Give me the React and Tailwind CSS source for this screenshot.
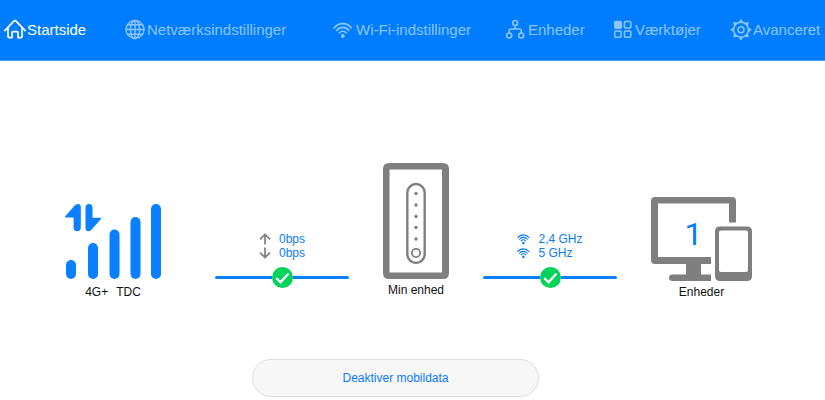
import clsx from "clsx";

const stroke = {
  fill: "none",
  stroke: "currentColor",
  strokeWidth: 1.5,
  strokeLinecap: "round",
  strokeLinejoin: "round",
};

function HomeIcon() {
  return (
    <svg className="h-[22px] w-[22px] shrink-0" viewBox="0 0 22 22" aria-hidden="true" {...stroke} strokeWidth="1.7">
      <path d="M.8 11.6 9.9 2.2Q11 1.2 12.1 2.2L21.2 11.6" />
      <path d="M4 9.6V17.5Q4 18.7 5.2 18.7H8V13.5Q8 12.6 8.9 12.6H13.1Q14 12.6 14 13.5V18.7H16.8Q18 18.7 18 17.5V9.6" />
    </svg>
  );
}

function GlobeIcon() {
  return (
    <svg className="h-[22px] w-[22px] shrink-0" viewBox="0 0 22 22" aria-hidden="true" {...stroke} strokeWidth="1.4">
      <circle cx="11" cy="10.5" r="9" />
      <ellipse cx="11" cy="10.5" rx="4.6" ry="9" />
      <path d="M11 1.5V19.5M2 10.5H20M3.3 5.8H18.7M3.3 15.2H18.7" />
    </svg>
  );
}

function WifiIcon({ className, viewBox = "0 0 22 22" }) {
  return (
    <svg className={className} viewBox={viewBox} aria-hidden="true" {...stroke} strokeWidth="1.7">
      <path d="M1.2 8.9A10.8 10.8 0 0 1 18.4 8.9" />
      <path d="M3.8 11.4A7.6 7.6 0 0 1 15.800 11.4" />
      <path d="M6.400 13.800A4.500 4.500 0 0 1 13.200 13.800" />
      <circle cx="9.800" cy="17" r="1.900" fill="currentColor" stroke="none" />
    </svg>
  );
}

function NetworkIcon() {
  return (
    <svg className="h-[22px] w-[22px] shrink-0" viewBox="0 0 22 22" aria-hidden="true" {...stroke} strokeWidth="1.6">
      <circle cx="10.2" cy="4" r="2.5" />
      <circle cx="4.2" cy="16.5" r="2.5" />
      <circle cx="16.2" cy="16.5" r="2.5" />
      <path d="M10.2 6.5V10M4.2 13.8V11.5Q4.2 10 5.7 10H14.7Q16.2 10 16.2 11.5V13.8" />
    </svg>
  );
}

function ToolsIcon() {
  return (
    <svg className="h-[22px] w-[22px] shrink-0" viewBox="0 0 22 22" aria-hidden="true" {...stroke}>
      <rect x="2.7" y="2.6" width="6.6" height="6.6" rx="1" fill="currentColor" />
      <rect x="12.4" y="2.6" width="6.4" height="6.4" rx="1" />
      <rect x="2.7" y="12" width="6.4" height="6.2" rx="1" />
      <rect x="12.4" y="12" width="6.4" height="6.2" rx="1" />
    </svg>
  );
}

function GearIcon() {
  return (
    <svg className="h-[22px] w-[22px] shrink-0" viewBox="0 0 22 22" aria-hidden="true" {...stroke}>
      <circle cx="11" cy="10.7" r="7.5" />
      <circle cx="11" cy="10.7" r="3" />
      {[0, 45, 90, 135, 180, 225, 270, 315].map((deg) => (
        <path key={deg} d="M9.8 2.8 11 1 12.2 2.8Z" fill="currentColor" transform={`rotate(${deg} 11 10.7)`} />
      ))}
    </svg>
  );
}

const menu = [
  { label: "Startside", icon: <HomeIcon />, active: true },
  { label: "Netværksindstillinger", icon: <GlobeIcon /> },
  { label: "Wi-Fi-indstillinger", icon: <WifiIcon className="h-[22px] w-[22px] shrink-0" /> },
  { label: "Enheder", icon: <NetworkIcon /> },
  { label: "Værktøjer", icon: <ToolsIcon /> },
  { label: "Avanceret", icon: <GearIcon /> },
];

function SignalIcon() {
  return (
    <svg className="h-[75px] w-[96px] text-[#0a80ff]" viewBox="0 0 96 75" fill="currentColor" aria-hidden="true">
      <path d="M.8 13.4Q-.7 13.4 .6 11.8L9.5 1.7Q11 0 13 0Q15.8 0 15.8 3V23.5Q15.8 27.2 12.2 27.2Q8.6 27.2 8.6 23.5V13.4Z" />
      <path d="M20.5 3.5Q20.5 0 24 0Q27.5 0 27.5 3.5V13.7H35Q37 13.7 35.7 15.3L26.5 25.7Q25 27.3 23 27.2Q20.5 27 20.5 24Z" />
      <rect x="1" y="56" width="10" height="19" rx="5" />
      <rect x="23" y="39" width="10" height="36" rx="5" />
      <rect x="44.5" y="25.5" width="10" height="49.5" rx="5" />
      <rect x="65.5" y="13" width="10" height="62" rx="5" />
      <rect x="86" y="0" width="10" height="75" rx="5" />
    </svg>
  );
}

function RouterIcon() {
  return (
    <svg className="h-[116px] w-[66px] text-[#7f7f7f]" viewBox="0 0 66 116" fill="none" stroke="currentColor" aria-hidden="true">
      <path
        d="M6 0H60Q66 0 66 6V110Q66 116 60 116H6Q0 116 0 110V6Q0 0 6 0ZM6.5 6.5V109.5H59V6.5Z"
        fill="currentColor"
        fillRule="evenodd"
        stroke="none"
      />
      <rect x="24.3" y="21" width="17.4" height="79" rx="8.7" strokeWidth="2.4" />
      {[30.5, 42, 53.5, 64.5, 76].map((cy) => (
        <circle key={cy} cx="33" cy={cy} r="1.7" fill="currentColor" stroke="none" />
      ))}
      <circle cx="33" cy="90" r="4.2" strokeWidth="1.7" />
    </svg>
  );
}

function DevicesIcon() {
  return (
    <svg className="h-[84px] w-[101px] text-[#7f7f7f]" viewBox="0 0 101 84" fill="currentColor" aria-hidden="true">
      <path d="M4 0H81Q85 0 85 4V25.5H78V6.5H7V60H60V67H50V77.5H60V84H21.5Q18 84 18 80.7Q18 77.5 21.5 77.5H35V67H4Q0 67 0 63V4Q0 0 4 0Z" />
      <path
        d="M69 29.5H96Q101 29.5 101 34.5V79Q101 84 96 84H69Q64 84 64 79V34.5Q64 29.5 69 29.5ZM70 33.5Q68 33.5 68 35.5V73Q68 75 70 75H95Q97 75 97 73V35.5Q97 33.5 95 33.5Z"
        fillRule="evenodd"
      />
    </svg>
  );
}

function ArrowIcon({ down }) {
  return (
    <svg className="h-3 w-3" viewBox="0 0 12 12" fill="none" stroke="#7f7f7f" strokeWidth="1.7" aria-hidden="true">
      <path d={down ? "M6 .5V10.5M1 5.7 6 10.5 11 5.7" : "M6 11.5V1.5M1 6.3 6 1.5 11 6.3"} />
    </svg>
  );
}

// Connection between two nodes, with its details above the line
function Link({ rows }) {
  return (
    <div className="w-[134px] pb-[11px]">
      <div className="mb-[7px] flex justify-center">
        <ul className="text-[#0a7cff]">
          {rows.map((row, i) => (
            <li key={i} className="flex h-[14px] items-center gap-2 whitespace-nowrap">
              {row.icon}
              {row.text}
            </li>
          ))}
        </ul>
      </div>
      <div className="flex items-center">
        <span className="h-[3px] grow rounded-l-full bg-[#0a80ff]" />
        <svg className="h-[21px] w-[21px]" viewBox="0 0 21 21" role="img" aria-label="Forbundet">
          <circle cx="10.5" cy="10.5" r="10.5" fill="#00d35a" />
          <path d="M4.3 11.2 8.5 15.3 16.5 6.5" fill="none" stroke="#fff" strokeWidth="2.4" />
        </svg>
        <span className="h-[3px] grow rounded-r-full bg-[#0a80ff]" />
      </div>
    </div>
  );
}

export default function App() {
  const wifi = <WifiIcon className="h-3 w-[13px]" viewBox="0 2 20 18" />;

  return (
    <div className="min-h-screen bg-white font-['Liberation_Sans',Arial,sans-serif] text-xs leading-[14px] text-[#111]">
      <header className="border-b border-[#3d9bff] bg-[#007dff]">
        <nav className="grid h-[60px] grid-cols-[120fr_209fr_172fr_107fr_118fr_95fr] items-center pl-1">
          {menu.map((item) => (
            <a
              key={item.label}
              href="#"
              className={clsx(
                "flex items-center gap-px text-[15px] leading-5 whitespace-nowrap",
                item.active ? "text-white" : "text-[#8cc5ff]"
              )}
            >
              {item.icon}
              {item.label}
            </a>
          ))}
        </nav>
      </header>

      <main className="pt-[102px]">
        <section className="flex items-end justify-center gap-[34px] pr-2">
          <div className="mr-5 flex flex-col items-center gap-[6px]">
            <SignalIcon />
            <p className="flex gap-2">
              <span>4G+</span>
              <span>TDC</span>
            </p>
          </div>

          <Link
            rows={[
              { icon: <ArrowIcon />, text: "0bps" },
              { icon: <ArrowIcon down />, text: "0bps" },
            ]}
          />

          <div className="flex flex-col items-center gap-1 pb-[2px]">
            <RouterIcon />
            <p>Min enhed</p>
          </div>

          <Link
            rows={[
              { icon: wifi, text: "2,4 GHz" },
              { icon: wifi, text: "5 GHz" },
            ]}
          />

          <div className="flex flex-col items-center gap-1">
            <div className="relative">
              <DevicesIcon />
              <span className="absolute inset-x-0 top-0 flex h-[74px] items-center justify-center pr-4 font-[Roboto,sans-serif] text-[32px] text-[#007dff]">
                1
              </span>
            </div>
            <p>Enheder</p>
          </div>
        </section>

        <div className="mt-[60px] flex justify-center pr-[34px]">
          <button
            type="button"
            className="h-[38px] w-[287px] rounded-full border border-[#dedede] bg-[#f7f7f7] text-[#0a7cff]"
          >
            Deaktiver mobildata
          </button>
        </div>
      </main>
    </div>
  );
}
